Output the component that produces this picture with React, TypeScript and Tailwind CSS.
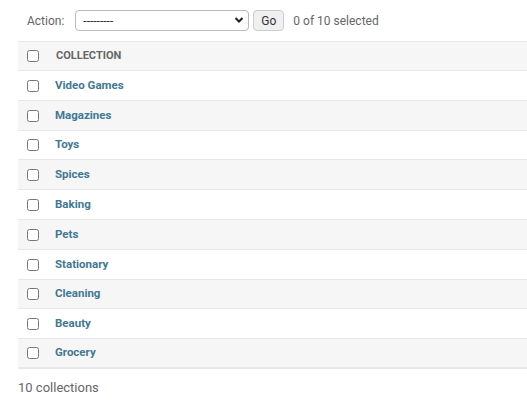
const collections = [
  "Video Games",
  "Magazines",
  "Toys",
  "Spices",
  "Baking",
  "Pets",
  "Stationary",
  "Cleaning",
  "Beauty",
  "Grocery",
];

export default function App() {
  return (
    <div className="min-h-[401px] bg-white font-['Roboto',sans-serif] text-[13px] text-[#333]">
      {/* actions bar */}
      <div className="flex h-[41px] items-center pl-[27px] text-[12px]">
        <span className="text-[#666]">Action:</span>
        <div className="relative ml-[11px] h-[21px] w-[174px]">
          <select className="h-full w-full appearance-none rounded-[4px] border border-[#bbb] bg-white pl-[7px] text-[12px] text-[#333] outline-none">
            <option>---------</option>
          </select>
          <svg
            className="pointer-events-none absolute right-[5px] top-[6px]"
            width="10"
            height="8"
            viewBox="0 0 10 8"
          >
            <path d="M1.5 2 L5 5.5 L8.5 2" fill="none" stroke="#222" strokeWidth="2" />
          </svg>
        </div>
        <button className="ml-[4px] h-[21px] w-[31px] rounded-[4px] border border-[#ccc] bg-[#f0f0f0] text-[12px] text-[#333]">
          Go
        </button>
        <span className="ml-[9px] text-[#666]">0 of 10 selected</span>
      </div>

      {/* result table */}
      <div className="ml-[18px]">
        <div className="flex h-[30px] items-center border-y border-[#e8e8e8] bg-[#f6f6f6]">
          <input type="checkbox" className="m-0 ml-[9px] h-[12px] w-[12px]" />
          <span className="ml-[17px] text-[11px] font-bold uppercase text-[#666]">
            Collection
          </span>
        </div>
        {collections.map((name, i) => (
          <div
            key={name}
            className={
              "flex items-center " +
              (i === 2 || i === 7 ? "h-[29px] " : "h-[30px] ") +
              (i === collections.length - 1 ? "border-b-2 border-[#e8e8e8] " : "border-b border-[#e8e8e8] ") +
              (i % 2 === 1 ? "bg-[#f6f6f6]" : "bg-white")
            }
          >
            <input type="checkbox" className="m-0 ml-[9px] h-[12px] w-[12px]" />
            <a href="#" className="ml-[16px] text-[11.5px] font-bold text-[#417893]">
              {name}
            </a>
          </div>
        ))}
      </div>

      <p className="ml-[18px] mt-[9px] text-[#666]">10 collections</p>
    </div>
  );
}
